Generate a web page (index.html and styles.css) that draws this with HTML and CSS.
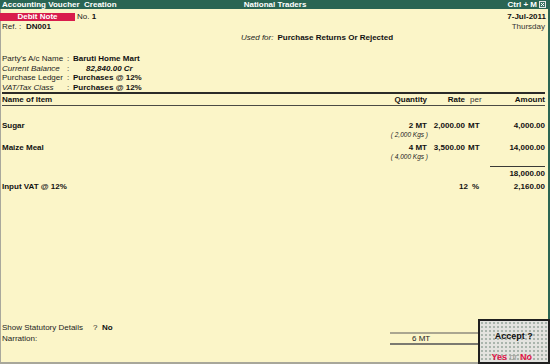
FILE: index.html
```html
<!DOCTYPE html>
<html>
<head>
<meta charset="utf-8">
<title>Accounting Voucher Creation</title>
<link rel="stylesheet" href="styles.css">
</head>
<body>
<div class="screen">
  <div class="titlebar">
    <div class="tb-left">Accounting Voucher&nbsp; Creation</div>
    <div class="tb-center">National Traders</div>
    <div class="tb-right"><span>Ctrl + M</span><svg class="close" width="7" height="7" viewBox="0 0 7 7"><rect x="0.5" y="0.5" width="6" height="6" fill="#3b7565" stroke="#e4e4e4" stroke-width="1"/><path d="M2 2 L5 5 M5 2 L2 5" stroke="#ffffff" stroke-width="1"/></svg></div>
  </div>
  <div class="panel">
    <div class="vhead">
      <div class="vtype"><span class="badge">Debit Note</span><span class="no">No. <b>1</b></span></div>
      <div class="date">7-Jul-2011</div>
      <div class="ref"><span class="ref-label">Ref. :</span><b>DN001</b></div>
      <div class="day">Thursday</div>
    </div>
    <div class="usedfor"><i>Used for:</i><b>Purchase Returns Or Rejected</b></div>
    <div class="party">
      <span>Party's A/c Name</span><span class="colon">:</span><b>Baruti Home Mart</b>
      <i>Current Balance</i><span class="colon">:</span><b class="bal">82,840.00 Cr</b>
      <span>Purchase Ledger</span><span class="colon">:</span><b>Purchases @ 12%</b>
      <i>VAT/Tax Class</i><span class="colon">:</span><b>Purchases @ 12%</b>
    </div>
    <div class="items">
      <div class="row head"><span>Name of Item</span><span class="r">Quantity</span><span class="r">Rate</span><span class="per">per</span><span class="r">Amount</span></div>
      <div class="item first">
        <div class="row"><b>Sugar</b><b class="r">2 MT</b><b class="r">2,000.00</b><b class="unit">MT</b><b class="r">4,000.00</b></div>
        <div class="row sub"><span></span><i class="r">( 2,000 Kgs )</i></div>
      </div>
      <div class="item">
        <div class="row"><b>Maize Meal</b><b class="r">4 MT</b><b class="r">3,500.00</b><b class="unit">MT</b><b class="r">14,000.00</b></div>
        <div class="row sub"><span></span><i class="r">( 4,000 Kgs )</i></div>
      </div>
      <div class="row subtotal"><span></span><span></span><span></span><span></span><b class="r total">18,000.00</b></div>
      <div class="row vat"><b>Input VAT @ 12%</b><span></span><b class="r pct">12</b><b class="unit pct-unit">%</b><b class="r">2,160.00</b></div>
    </div>
    <div class="spacer"></div>
    <div class="footer">
      <div class="stat"><span class="stat-label">Show Statutory Details</span><span>?</span><b class="stat-val">No</b></div>
      <div class="narr"><span class="narr-label">Narration:</span><div class="qtybox"><span>6 MT</span></div></div>
    </div>
  </div>
  <div class="accept">
    <div class="accept-q">Accept ?</div>
    <div class="accept-a"><span class="red">Yes</span> <span class="or">or</span> <span class="red">No</span></div>
  </div>
</div>
</body>
</html>
```

FILE: styles.css
```css
html, body {
  margin: 0;
  padding: 0;
  background: #fbf5c8;
  overflow: hidden;
}

.screen {
  position: relative;
  width: 550px;
  height: 364px;
  display: flex;
  flex-direction: column;
  font-family: "Liberation Sans", Arial, sans-serif;
  font-size: 8px;
  color: #1e1e1e;
}

b { font-weight: bold; color: #111; }
i { font-style: italic; }

.titlebar {
  height: 9px;
  line-height: 9px;
  background: #2a6553;
  color: #ffffff;
  font-weight: bold;
  display: grid;
  grid-template-columns: 1fr auto 1fr;
  white-space: pre;
}
.tb-left { padding-left: 2px; }
.tb-right {
  display: flex;
  justify-content: flex-end;
  align-items: center;
  gap: 2px;
  padding-right: 4px;
}
.close { display: block; }

.panel {
  flex: 1;
  box-sizing: border-box;
  border-left: 1px solid #a9a89c;
  border-right: 2px solid #2a6553;
  border-bottom: 2px solid #a8a79a;
  padding: 4px 3px 17px 1px;
  display: flex;
  flex-direction: column;
}

.vhead {
  display: grid;
  grid-template-columns: 1fr auto;
  grid-template-rows: 8px 10px;
  row-gap: 1px;
}
.vtype { display: flex; align-items: center; line-height: 8px; }
.badge {
  display: inline-block;
  width: 75px;
  height: 8px;
  line-height: 8px;
  margin-left: -2px;
  background: #d81c4c;
  color: #ffffff;
  font-weight: bold;
  text-align: center;
}
.no { margin-left: 2px; }
.date { font-weight: bold; color: #111; line-height: 8px; text-align: right; margin-right: -1px; }
.ref { line-height: 10px; }
.ref-label { display: inline-block; width: 24px; }
.day { line-height: 10px; text-align: right; color: #333; }

.usedfor {
  margin-top: 1px;
  line-height: 9px;
  padding-left: 239px;
}
.usedfor b { margin-left: 4px; }

.party {
  margin-top: 12px;
  display: grid;
  grid-template-columns: 64px 7px 1fr;
  line-height: 9.5px;
}
.colon { padding-left: 1px; }
.bal { font-style: italic; padding-left: 13px; }

.items { display: flex; flex-direction: column; }
.row {
  display: grid;
  grid-template-columns: 1fr 60px 38px 25px 55px;
  line-height: 9px;
  white-space: nowrap;
}
.r { text-align: right; }
.head {
  border-top: 2px solid #2b2b28;
  border-bottom: 1px solid #4a4a44;
  line-height: 11px;
  font-weight: bold;
  color: #111;
}
.per { font-weight: normal; padding-left: 5px; color: #333; }
.unit { padding-left: 3px; }
.item { margin-top: 4px; }
.item.first { margin-top: 15px; }
.sub i { font-size: 6.5px; margin-right: -1px; color: #222; }
.subtotal { margin-top: 5px; }
.total { border-top: 1px solid #3a3a36; padding-top: 2px; }
.vat { margin-top: 4px; }
.pct { margin-right: -3px; }
.pct-unit { padding-left: 7px; }

.spacer { flex: 1; }

.footer { display: flex; flex-direction: column; }
.stat { line-height: 9px; display: flex; }
.stat-label { width: 91px; }
.stat-val { margin-left: 4.5px; }
.narr { display: flex; align-items: center; }
.narr-label { width: 388px; line-height: 9px; }
.qtybox {
  flex: 1;
  border-top: 2px solid #aaa690;
  border-bottom: 2px solid #7b7a70;
  line-height: 9px;
  padding-left: 22px;
  color: #222;
}

.accept {
  position: absolute;
  right: 0;
  bottom: 0;
  width: 72.5px;
  height: 45px;
  box-sizing: border-box;
  border: 2px solid #1f1f1f;
  background-color: #e3e3df;
  background-image: radial-gradient(circle, #a7b3aa 0.7px, transparent 0.9px);
  background-size: 4px 4px;
  text-align: center;
  font-weight: bold;
  font-size: 9px;
  color: #111;
  padding-top: 10px;
}
.accept-q { line-height: 10px; }
.accept-a { line-height: 10px; margin-top: 11px; margin-right: 4px; }
.red { color: #e01248; }
.or { color: #9a9a96; font-weight: normal; }
```
